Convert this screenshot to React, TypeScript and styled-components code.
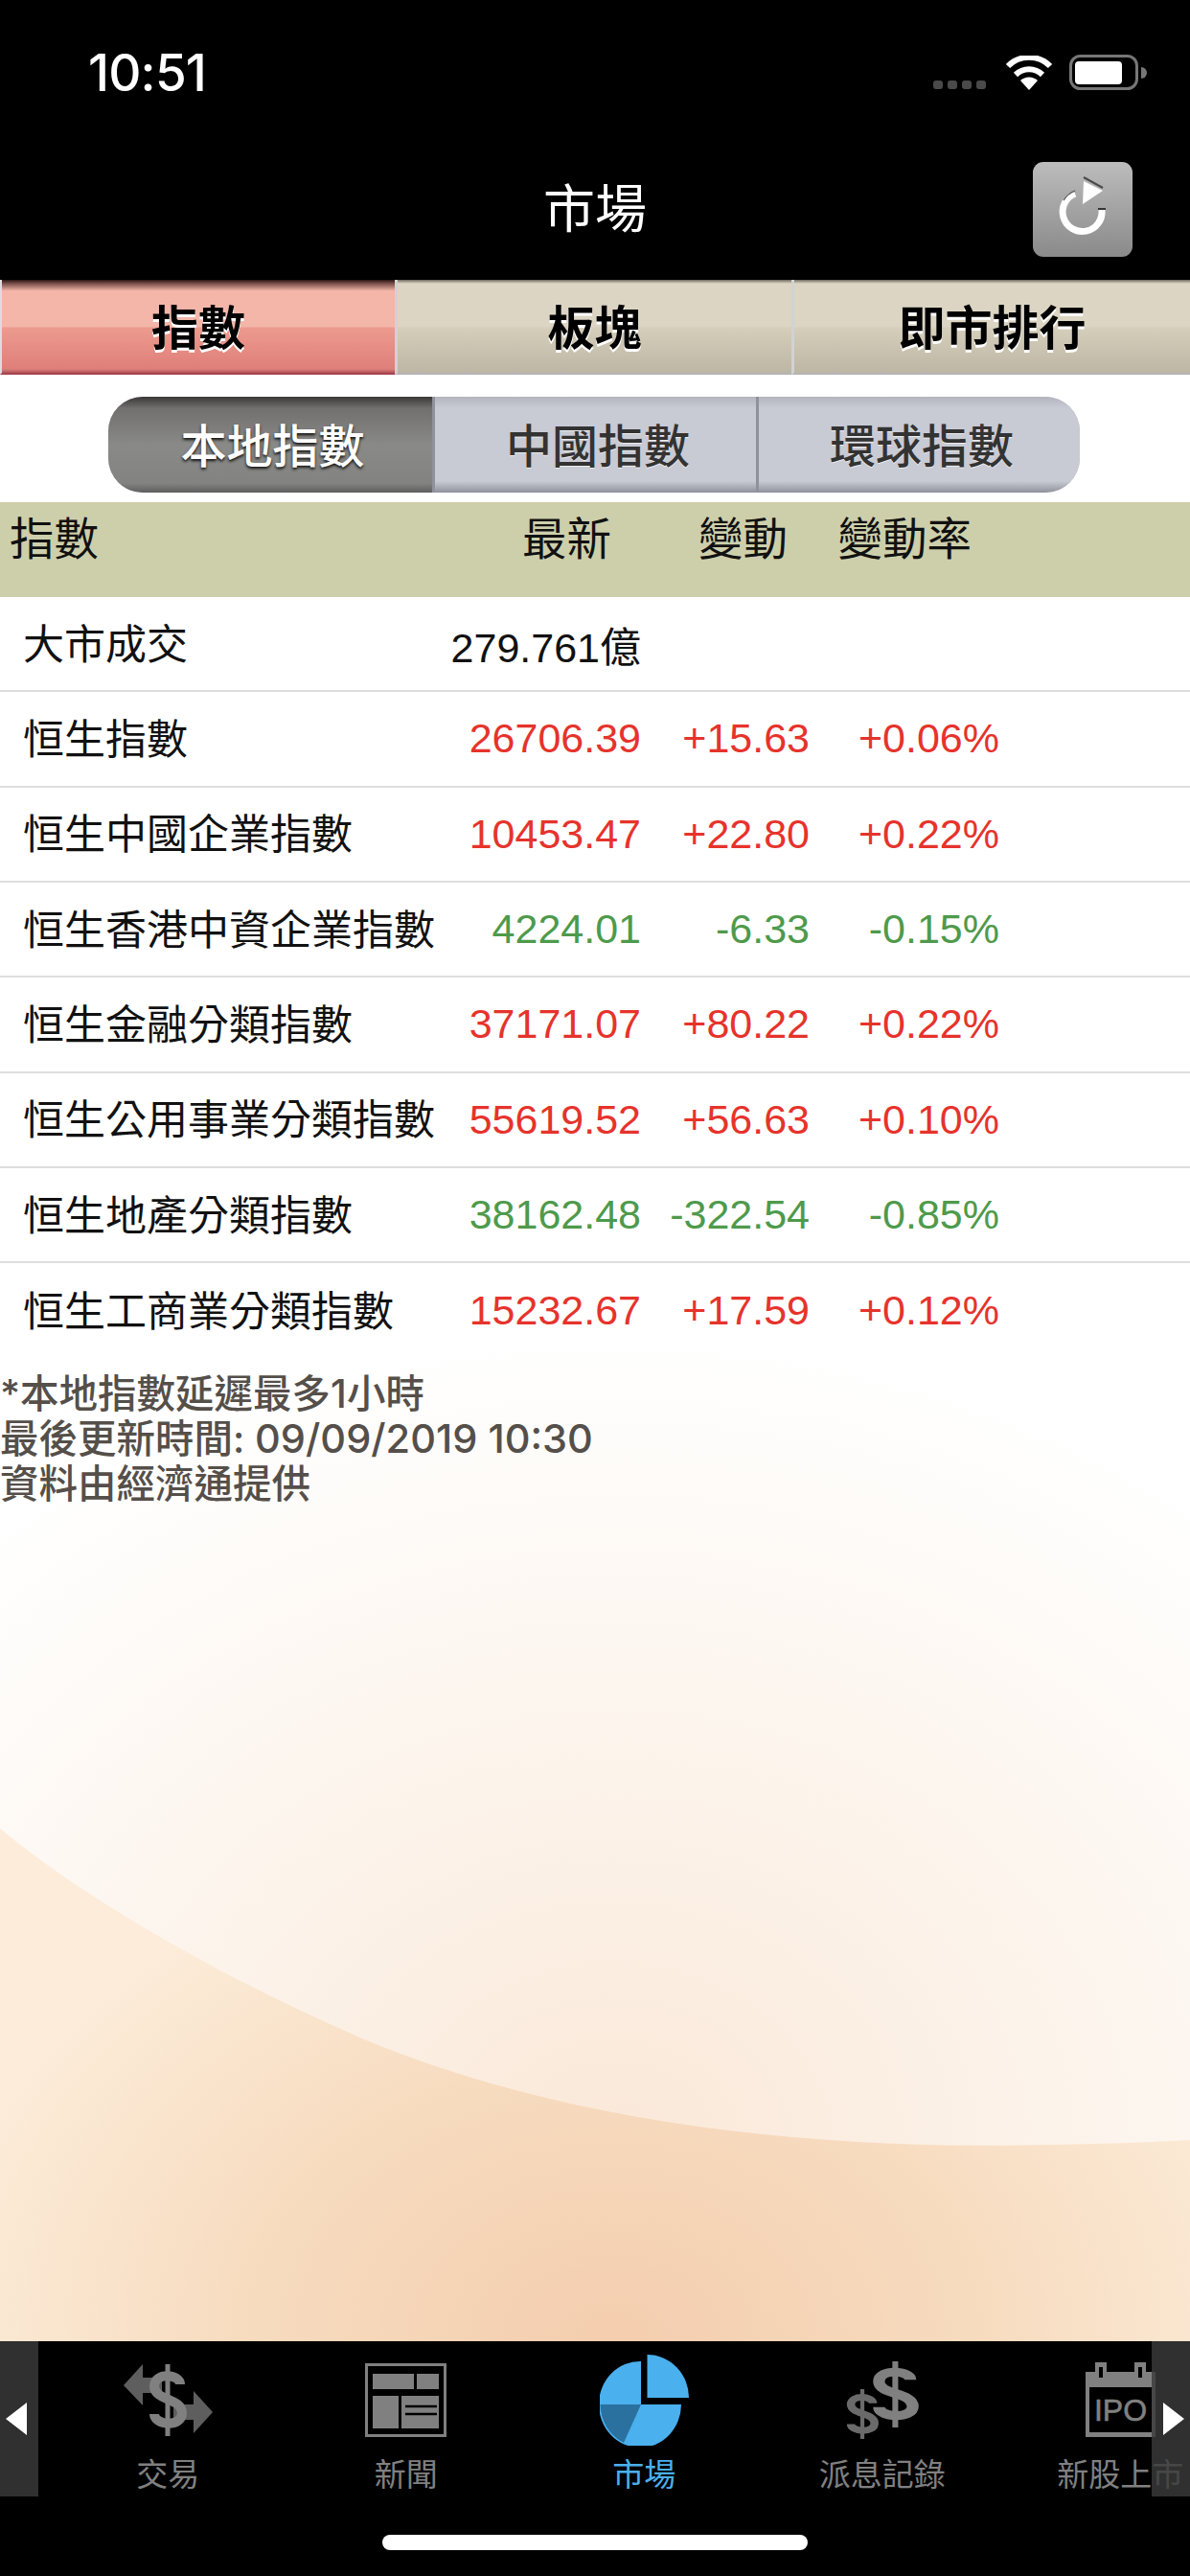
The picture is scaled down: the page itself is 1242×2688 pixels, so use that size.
import React from "react";
import styled, { createGlobalStyle } from "styled-components";

const Global = createGlobalStyle`
  html, body { margin: 0; padding: 0; background: #000; }
  body { font-family: "Liberation Sans", "Noto Sans CJK TC", sans-serif; }
`;

const Screen = styled.div`
  width: 1242px;
  height: 2688px;
  display: flex;
  flex-direction: column;
  overflow: hidden;
  background: #000;
`;

const StatusBar = styled.div`
  height: 145px;
  flex: none;
  display: flex;
  align-items: flex-start;
  justify-content: space-between;
  padding: 45px 45px 0 92px;
  box-sizing: border-box;
`;

const Clock = styled.div`
  font-family: Inter, "Liberation Sans", sans-serif;
  font-size: 53px;
  line-height: 62px;
  font-weight: 500;
  letter-spacing: -0.8px;
  color: #fff;
`;

const StatusIcons = styled.div`
  display: flex;
  align-items: flex-end;
  gap: 17px;
  padding-top: 12px;
`;

const SignalDots = styled.div`
  display: flex;
  gap: 5px;
  margin-bottom: 1px;
  margin-right: 3px;
`;

const SignalDot = styled.span`
  width: 10px;
  height: 9px;
  border-radius: 3px;
  background: #4a4a4a;
`;

const NavBar = styled.div`
  height: 147px;
  flex: none;
  display: grid;
  grid-template-columns: 1fr auto 1fr;
  align-items: center;
  padding: 0 60px;
  box-sizing: border-box;
`;

const Title = styled.h1`
  grid-column: 2;
  margin: 0;
  font-size: 54px;
  font-weight: 400;
  line-height: 60px;
  color: #fff;
`;

const RefreshButton = styled.div`
  grid-column: 3;
  justify-self: end;
  width: 104px;
  height: 99px;
  border-radius: 11px;
  background: linear-gradient(#bcbcbc, #8a8a8a);
  display: flex;
`;

const Content = styled.main`
  position: relative;
  flex: 1;
  min-height: 0;
  background: #fff;
`;

const Backdrop = styled.svg`
  position: absolute;
  left: 0;
  bottom: 0;
  width: 1242px;
  height: 1300px;
`;

const Layer = styled.div`
  position: relative;
  display: flex;
  flex-direction: column;
`;

const Tabs = styled.div`
  height: 99px;
  display: grid;
  grid-template-columns: 412px 414px 1fr;
`;

const Tab = styled.div<{ $active?: boolean }>`
  display: flex;
  align-items: center;
  justify-content: center;
  font-size: 49px;
  font-weight: 700;
  color: #000;
  text-shadow: 0 3px 0 #fff;
  padding-bottom: 5px;
  box-sizing: border-box;
  border-left: ${(p) => (p.$active ? "2px solid #ddd" : "3px solid #d2d2d2")};
  border-bottom: 2px solid ${(p) => (p.$active ? "#a8424c" : "#b4b4b4")};
  background: ${(p) =>
    p.$active
      ? "linear-gradient(#2a1615 0%, #7a4f49 4%, #f3b6a8 12%, #f3b6a8 50%, #ec9a8e 52%, #df7f7a 96%, #b2525a 100%)"
      : "linear-gradient(#6d6a5f 0%, #dcd5c3 4%, #dcd5c3 50%, #d5cebb 52%, #bdb6a4 100%)"};
`;

const Segments = styled.div`
  align-self: flex-start;
  width: 1014px;
  height: 100px;
  margin: 23px 0 10px 113px;
  display: grid;
  grid-template-columns: 338px 338px 1fr;
  border-radius: 36px;
  overflow: hidden;
  box-shadow: inset 0 0 0 1px #b5b6bf;
`;

const Segment = styled.div<{ $active?: boolean }>`
  display: flex;
  align-items: center;
  justify-content: center;
  font-size: 48px;
  font-weight: 500;
  padding: 0 0 5px 5px;
  color: ${(p) => (p.$active ? "#fff" : "#333")};
  text-shadow: ${(p) => (p.$active ? "0 2px 3px #111" : "0 1px 0 #eee")};
  border-left: ${(p) => (p.$active ? "none" : "3px solid #8f919b")};
  background: ${(p) =>
    p.$active
      ? "linear-gradient(#3a3836 0%, #71706e 12%, #898987 50%, #838381 90%, #5f5f5f 100%)"
      : "linear-gradient(#b3b4be 0%, #c8cad4 12%, #c8cad4 88%, #8f919c 100%)"};
`;

const HeaderRow = styled.div`
  height: 99px;
  display: grid;
  grid-template-columns: 503px 125px 184px 192px;
  padding: 9px 0 0 10px;
  box-sizing: border-box;
  background: #cdcfab;
  font-size: 46.5px;
  line-height: 60px;
  color: #111;
`;

const HeaderCell = styled.span<{ $left?: boolean }>`
  text-align: ${(p) => (p.$left ? "left" : "right")};
  white-space: nowrap;
`;

const Row = styled.div`
  height: 99.33px;
  display: grid;
  grid-template-columns: 440px 203px 176px 198px;
  align-items: center;
  padding-left: 26px;
  box-sizing: border-box;
  font-size: 43px;
  color: #111;
  border-bottom: 2px solid #dedede;
  &:last-child { border-bottom: none; }
`;

const NameCell = styled.span`
  white-space: nowrap;
  margin-left: -2px;
  padding-bottom: 6px;
`;

const NumberCell = styled.span<{ $tone?: "up" | "down" }>`
  text-align: right;
  white-space: nowrap;
  color: ${(p) => (p.$tone === "up" ? "#e6332c" : p.$tone === "down" ? "#4e9a4b" : "#111")};
`;

const Footnote = styled.div`
  margin-top: 14px;
  font-family: Inter, "Noto Sans CJK TC", sans-serif;
  font-size: 40.5px;
  line-height: 46.5px;
  font-weight: 500;
  color: #554f4a;
`;

const FootLine = styled.div`
  white-space: nowrap;
`;

const FootStamp = styled.span`
  font-size: 41.5px;
`;

const BottomBar = styled.nav`
  position: relative;
  flex: none;
  height: 245px;
  background: #000;
  overflow: hidden;
`;

const TabStrip = styled.div`
  display: flex;
  padding-left: 51px;
  height: 162px;
`;

const TabItem = styled.div<{ $active?: boolean }>`
  flex: none;
  width: 248.5px;
  height: 162px;
  display: flex;
  flex-direction: column;
  align-items: center;
  color: ${(p) => (p.$active ? "#4ab0ee" : "#808080")};
  font-size: 33px;
`;

const IconSlot = styled.div`
  height: 122px;
  flex: none;
  display: flex;
  align-items: center;
  justify-content: center;
`;

const TabLabel = styled.div`
  line-height: 42px;
  margin-top: -3px;
  white-space: nowrap;
`;

const ScrollHint = styled.div<{ $side: "left" | "right" }>`
  position: absolute;
  top: 0;
  ${(p) => p.$side}: 0;
  width: 40px;
  height: 162px;
  background: rgba(58, 58, 58, 0.82);
  display: flex;
  align-items: center;
  justify-content: ${(p) => (p.$side === "left" ? "flex-start" : "flex-end")};
  padding: 0 6px;
  box-sizing: border-box;
`;

const HomeIndicator = styled.div`
  position: absolute;
  left: 399px;
  top: 202px;
  width: 444px;
  height: 16px;
  border-radius: 8px;
  background: #fff;
`;

const WifiIcon = () => (
  <svg width="50" height="36" viewBox="0 0 50 36">
    <path d="M25 36 L16 26 A13 13 0 0 1 34 26 Z" fill="#fff" />
    <path d="M11 20 A20 20 0 0 1 39 20" fill="none" stroke="#fff" strokeWidth="6" />
    <path d="M3 11 A31 31 0 0 1 47 11" fill="none" stroke="#fff" strokeWidth="6" />
  </svg>
);

const BatteryIcon = () => (
  <svg width="81" height="37" viewBox="0 0 81 37">
    <rect x="1.5" y="1.5" width="69" height="34" rx="10" fill="none" stroke="#777" strokeWidth="3" />
    <rect x="6" y="7" width="49" height="24" rx="4" fill="#fff" />
    <path d="M75 13 A6 6 0 0 1 75 25 Z" fill="#777" />
  </svg>
);

// Circular arrow with its embossed dark edges, drawn to the button's full size
const RefreshIcon = () => (
  <svg width="104" height="99" viewBox="0 0 104 99">
    <path d="M72 50 A20.5 20.5 0 1 1 44 33" fill="none" stroke="#fff" strokeWidth="7" />
    <path d="M44 30 A23 23 0 0 0 32 40" fill="none" stroke="#666" strokeWidth="1.5" />
    <path d="M53 20 L73 30 L52 44 Z" fill="#fff" />
    <path d="M53 16 L73 27" stroke="#4a4a4a" strokeWidth="2" />
    <path d="M68 49 H76" stroke="#333" strokeWidth="2" />
  </svg>
);

const DollarMark = ({ x, y, sx, sy, color }: { x: number; y: number; sx: number; sy: number; color: string }) => (
  <g transform={`translate(${x} ${y}) scale(${sx} ${sy})`} fill="none" stroke={color}>
    <path d="M33 21 C33 10 6 8 6 23 C6 38 35 35 35 51 C35 66 6 64 6 52" strokeWidth="10" />
    <path d="M20 0 V75" strokeWidth="5" />
  </g>
);

const TradeIcon = () => (
  <svg width="93" height="75" viewBox="0 0 93 75">
    <path d="M0 22 L20 0 V14 H40 V30 H20 V43 Z" fill="#5e5e5e" />
    <path d="M93 50 L73 28 V42 H52 V58 H73 V72 Z" fill="#5e5e5e" />
    <DollarMark x={26} y={0} sx={1} sy={1} color="#808080" />
  </svg>
);

const NewsIcon = () => (
  <svg width="85" height="77" viewBox="0 0 85 77">
    <rect x="1.5" y="1.5" width="82" height="74" fill="none" stroke="#808080" strokeWidth="3" />
    <rect x="8" y="11" width="43" height="16" fill="#808080" />
    <rect x="54" y="11" width="23" height="16" fill="#808080" />
    <rect x="8" y="34" width="27" height="34" fill="#808080" />
    <rect x="38" y="34" width="39" height="34" fill="#808080" />
    <path d="M42 45 H75 M42 53 H75" stroke="#000" strokeWidth="2.5" />
  </svg>
);

const PieIcon = () => (
  <svg width="93" height="95" viewBox="0 0 93 95">
    <path d="M43 52 V7 A43 45 0 1 0 85 52 Z" fill="#4ab0ee" />
    <path d="M43 52 H0.5 A43 45 0 0 0 25 92 Z" fill="#2b719f" />
    <path d="M49.5 45 V0 A43.5 45 0 0 1 93 45 Z" fill="#4ab0ee" />
  </svg>
);

const DividendIcon = () => (
  <svg width="76" height="81" viewBox="0 0 76 81">
    <DollarMark x={0} y={29} sx={0.85} sy={0.7} color="#6a6a6a" />
    <DollarMark x={27} y={0} sx={1.22} sy={0.92} color="#808080" />
  </svg>
);

const IpoIcon = () => (
  <svg width="73" height="78" viewBox="0 0 73 78">
    <rect x="0" y="10" width="73" height="68" fill="#808080" />
    <rect x="10" y="0" width="12" height="20" fill="#808080" />
    <rect x="51" y="0" width="12" height="20" fill="#808080" />
    <rect x="14" y="5" width="4" height="11" fill="#000" />
    <rect x="55" y="5" width="4" height="11" fill="#000" />
    <rect x="4" y="26" width="65" height="47" fill="#000" />
    <text x="36.5" y="61" textAnchor="middle" fontFamily="Liberation Sans" fontSize="32" fill="#808080" stroke="#808080" strokeWidth="0.6">IPO</text>
  </svg>
);

const TriangleLeft = () => (
  <svg width="22" height="34" viewBox="0 0 22 34"><path d="M0 17 L22 0 V34 Z" fill="#fff" /></svg>
);

const TriangleRight = () => (
  <svg width="22" height="34" viewBox="0 0 22 34"><path d="M22 17 L0 0 V34 Z" fill="#fff" /></svg>
);

// Peach sweep behind the index table: a soft glow above, a deeper band under the curve
const PageBackdrop = () => (
  <Backdrop viewBox="0 0 1242 1300">
    <defs>
      <radialGradient id="glow" gradientUnits="userSpaceOnUse" cx="640" cy="1100" r="1000" gradientTransform="matrix(1 0 0 .85 0 165)">
        <stop offset="0" stopColor="#fae8d8" />
        <stop offset="0.45" stopColor="#fcf3ea" />
        <stop offset="1" stopColor="#ffffff" />
      </radialGradient>
      <radialGradient id="band" gradientUnits="userSpaceOnUse" cx="640" cy="1300" r="720" gradientTransform="matrix(1 0 0 .75 0 325)">
        <stop offset="0" stopColor="#f4cdae" />
        <stop offset="0.55" stopColor="#f7dcc0" />
        <stop offset="1" stopColor="#fcecd9" />
      </radialGradient>
    </defs>
    <rect width="1242" height="1300" fill="url(#glow)" />
    <path
      d="M0 765 C90 840 240 925 380 985 C620 1085 900 1100 1100 1095 C1160 1094 1210 1092 1242 1090 V1300 H0 Z"
      fill="url(#band)"
    />
  </Backdrop>
);

type Quote = { name: string; last: string; change?: string; pct?: string; tone?: "up" | "down" };

const quotes: Quote[] = [
  { name: "大市成交", last: "279.761億" },
  { name: "恒生指數", last: "26706.39", change: "+15.63", pct: "+0.06%", tone: "up" },
  { name: "恒生中國企業指數", last: "10453.47", change: "+22.80", pct: "+0.22%", tone: "up" },
  { name: "恒生香港中資企業指數", last: "4224.01", change: "-6.33", pct: "-0.15%", tone: "down" },
  { name: "恒生金融分類指數", last: "37171.07", change: "+80.22", pct: "+0.22%", tone: "up" },
  { name: "恒生公用事業分類指數", last: "55619.52", change: "+56.63", pct: "+0.10%", tone: "up" },
  { name: "恒生地產分類指數", last: "38162.48", change: "-322.54", pct: "-0.85%", tone: "down" },
  { name: "恒生工商業分類指數", last: "15232.67", change: "+17.59", pct: "+0.12%", tone: "up" },
];

export default function App() {
  return (
    <Screen>
      <Global />
      <StatusBar>
        <Clock>10:51</Clock>
        <StatusIcons>
          <SignalDots>
            <SignalDot />
            <SignalDot />
            <SignalDot />
            <SignalDot />
          </SignalDots>
          <WifiIcon />
          <BatteryIcon />
        </StatusIcons>
      </StatusBar>
      <NavBar>
        <Title>市場</Title>
        <RefreshButton>
          <RefreshIcon />
        </RefreshButton>
      </NavBar>
      <Content>
        <PageBackdrop />
        <Layer>
          <Tabs>
            <Tab $active>指數</Tab>
            <Tab>板塊</Tab>
            <Tab>即市排行</Tab>
          </Tabs>
          <Segments>
            <Segment $active>本地指數</Segment>
            <Segment>中國指數</Segment>
            <Segment>環球指數</Segment>
          </Segments>
          <HeaderRow>
            <HeaderCell $left>指數</HeaderCell>
            <HeaderCell>最新</HeaderCell>
            <HeaderCell>變動</HeaderCell>
            <HeaderCell>變動率</HeaderCell>
          </HeaderRow>
          <div>
            {quotes.map((q) => (
              <Row key={q.name}>
                <NameCell>{q.name}</NameCell>
                <NumberCell $tone={q.tone}>{q.last}</NumberCell>
                <NumberCell $tone={q.tone}>{q.change}</NumberCell>
                <NumberCell $tone={q.tone}>{q.pct}</NumberCell>
              </Row>
            ))}
          </div>
          <Footnote>
            <FootLine>*本地指數延遲最多1小時</FootLine>
            <FootLine>最後更新時間: <FootStamp>09/09/2019 10:30</FootStamp></FootLine>
            <FootLine>資料由經濟通提供</FootLine>
          </Footnote>
        </Layer>
      </Content>
      <BottomBar>
        <TabStrip>
          <TabItem>
            <IconSlot><TradeIcon /></IconSlot>
            <TabLabel>交易</TabLabel>
          </TabItem>
          <TabItem>
            <IconSlot><NewsIcon /></IconSlot>
            <TabLabel>新聞</TabLabel>
          </TabItem>
          <TabItem $active>
            <IconSlot><PieIcon /></IconSlot>
            <TabLabel>市場</TabLabel>
          </TabItem>
          <TabItem>
            <IconSlot><DividendIcon /></IconSlot>
            <TabLabel>派息記錄</TabLabel>
          </TabItem>
          <TabItem>
            <IconSlot><IpoIcon /></IconSlot>
            <TabLabel>新股上市</TabLabel>
          </TabItem>
        </TabStrip>
        <ScrollHint $side="left"><TriangleLeft /></ScrollHint>
        <ScrollHint $side="right"><TriangleRight /></ScrollHint>
        <HomeIndicator />
      </BottomBar>
    </Screen>
  );
}
